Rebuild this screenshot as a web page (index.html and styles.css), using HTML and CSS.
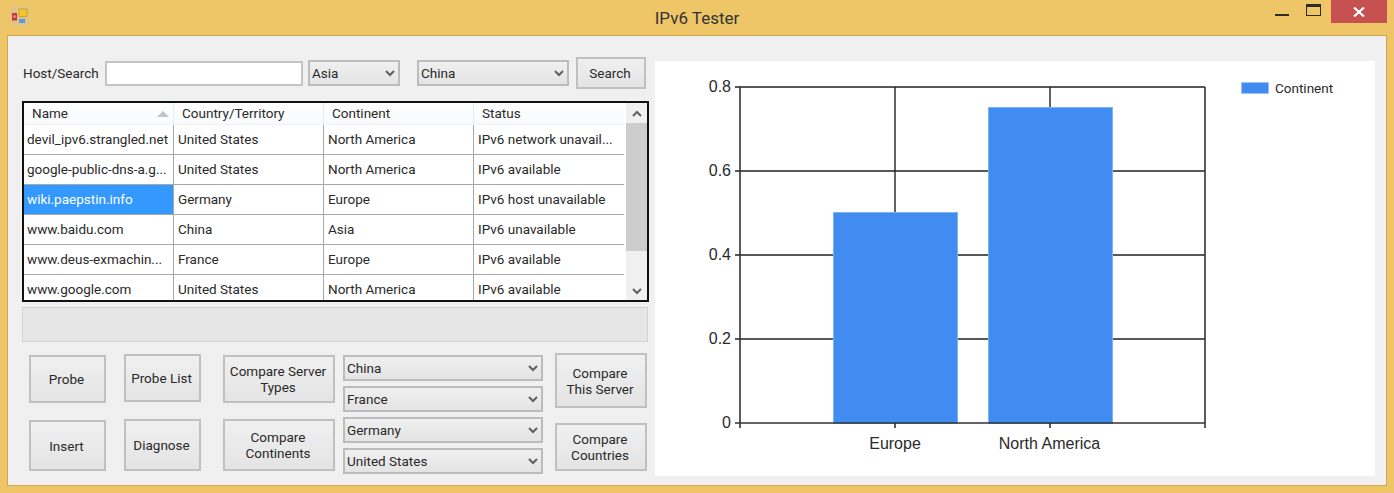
FILE: index.html
```html
<!DOCTYPE html>
<html lang="en">
<head>
    <meta charset="UTF-8">
    <meta name="viewport" content="width=device-width, initial-scale=1.0">
    <title>IPv6 Tester</title>
    <link rel="stylesheet" href="styles.css">
</head>
<body>

<svg class="defs" width="0" height="0">
    <symbol id="chev" viewBox="0 0 10 7">
        <path d="M1 1 L5 5 L9 1" fill="none" stroke="#606060" stroke-width="2"/>
    </symbol>
    <symbol id="chev-up" viewBox="0 0 10 7">
        <path d="M1 6 L5 2 L9 6" fill="none" stroke="#606060" stroke-width="2"/>
    </symbol>
</svg>

<div class="window">
    <div class="titlebar">
        <svg class="app-icon" width="18" height="18" viewBox="0 0 18 18">
            <rect width="18" height="18" fill="#dcc48a"/>
            <rect x="1" y="6" width="5" height="7.5" fill="#c8383c"/>
            <rect x="2.5" y="8.5" width="2" height="2" fill="#f0c0b0"/>
            <rect x="8" y="2" width="8" height="7.5" fill="#f4c62c" stroke="#b89020" stroke-width="0.6"/>
            <rect x="8" y="12" width="6" height="4" fill="#5a9ae0"/>
        </svg>
        <div class="title">IPv6 Tester</div>
        <div class="win-btns">
            <div class="win-min"></div>
            <div class="win-max"></div>
            <div class="win-close">
                <svg width="12" height="10" viewBox="0 0 12 10">
                    <path d="M1 0.5 L11 9.5 M11 0.5 L1 9.5" stroke="#fff" stroke-width="2.2"/>
                </svg>
            </div>
        </div>
    </div>

    <div class="panel">
        <div class="left">
            <div class="search-row">
                <label class="host-label">Host/Search</label>
                <input type="text" class="host-input">
                <div class="combo combo-continent"><span>Asia</span><svg><use href="#chev"/></svg></div>
                <div class="combo combo-country"><span>China</span><svg><use href="#chev"/></svg></div>
                <button class="btn btn-search">Search</button>
            </div>

            <div class="grid-box">
                <div class="grid-scroll">
                    <table class="hosts">
                        <thead>
                            <tr>
                                <th class="col-wide">Name<i class="sort"></i></th>
                                <th class="col-wide">Country/Territory</th>
                                <th class="col-wide">Continent</th>
                                <th>Status</th>
                            </tr>
                        </thead>
                        <tbody>
                            <tr><td>devil_ipv6.strangled.net</td><td>United States</td><td>North America</td><td>IPv6 network unavail...</td></tr>
                            <tr><td>google-public-dns-a.g...</td><td>United States</td><td>North America</td><td>IPv6 available</td></tr>
                            <tr><td class="selected">wiki.paepstin.info</td><td>Germany</td><td>Europe</td><td>IPv6 host unavailable</td></tr>
                            <tr><td>www.baidu.com</td><td>China</td><td>Asia</td><td>IPv6 unavailable</td></tr>
                            <tr><td>www.deus-exmachin...</td><td>France</td><td>Europe</td><td>IPv6 available</td></tr>
                            <tr><td>www.google.com</td><td>United States</td><td>North America</td><td>IPv6 available</td></tr>
                        </tbody>
                    </table>
                </div>
                <div class="scrollbar">
                    <svg class="arrow" width="10" height="7"><use href="#chev-up"/></svg>
                    <div class="thumb"></div>
                    <svg class="arrow arrow-down" width="10" height="7"><use href="#chev"/></svg>
                </div>
            </div>

            <div class="progress"></div>

            <div class="actions">
                <div class="col col1">
                    <button class="btn h48">Probe</button>
                    <button class="btn h51">Insert</button>
                </div>
                <div class="col col2">
                    <button class="btn h48">Probe List</button>
                    <button class="btn h52">Diagnose</button>
                </div>
                <div class="col col3">
                    <button class="btn h48">Compare Server Types</button>
                    <button class="btn h52">Compare Continents</button>
                </div>
                <div class="col col4">
                    <div class="combo"><span>China</span><svg><use href="#chev"/></svg></div>
                    <div class="combo"><span>France</span><svg><use href="#chev"/></svg></div>
                    <div class="combo"><span>Germany</span><svg><use href="#chev"/></svg></div>
                    <div class="combo"><span>United States</span><svg><use href="#chev"/></svg></div>
                </div>
                <div class="col col5">
                    <button class="btn h55">Compare<br>This Server</button>
                    <button class="btn h48">Compare Countries</button>
                </div>
            </div>
        </div>

        <div class="chart">
            <svg width="720" height="415" viewBox="655 61 720 415">
                <g stroke="#222" stroke-width="1.4" fill="none">
                    <path d="M735 87 H1205 M735 171 H1205 M735 255 H1205 M735 339 H1205"/>
                    <path d="M895 87 V212 M1050 87 V107"/>
                </g>
                <rect x="833.5" y="212.5" width="124" height="211" fill="#418cf0" stroke="#7fb2f5"/>
                <rect x="988.5" y="107.5" width="124" height="316" fill="#418cf0" stroke="#7fb2f5"/>
                <g stroke="#333" stroke-width="1.6" fill="none">
                    <path d="M740 87 V428 M1205 87 V428 M735 423 H1205 M895 423 V428 M1050 423 V428"/>
                </g>
                <g class="axis-y">
                    <text x="731" y="92">0.8</text>
                    <text x="731" y="176">0.6</text>
                    <text x="731" y="260">0.4</text>
                    <text x="731" y="344">0.2</text>
                    <text x="731" y="428">0</text>
                </g>
                <g class="axis-x">
                    <text x="895" y="449">Europe</text>
                    <text x="1049.5" y="449">North America</text>
                </g>
                <rect x="1241.5" y="82.5" width="27" height="11" fill="#418cf0" stroke="#9cc3f7"/>
                <text class="legend" x="1275" y="93">Continent</text>
            </svg>
        </div>
    </div>
</div>

</body>
</html>
```

FILE: styles.css
```css
* {
    box-sizing: border-box;
}
body {
    margin: 0;
    font-family: Roboto, "Open Sans", sans-serif;
    font-size: 13.5px;
    color: #2a2a2a;
}
.defs {
    display: block;
}
.window {
    width: 1394px;
    height: 493px;
    background-color: #eec667;
    overflow: hidden;
}

/* title bar */
.titlebar {
    height: 35px;
    display: flex;
    align-items: flex-start;
    position: relative;
}
.app-icon {
    margin: 7px 0 0 11px;
}
.title {
    position: absolute;
    left: 0;
    right: 0;
    top: 7px;
    text-align: center;
    font-size: 17px;
    line-height: 22px;
    color: #333;
}
.win-btns {
    margin-left: auto;
    margin-right: 7px;
    display: flex;
    align-items: flex-start;
}
.win-min {
    width: 14px;
    height: 2px;
    margin-top: 14px;
    background-color: #2b2b2b;
}
.win-max {
    width: 15px;
    height: 12px;
    margin: 4px 10px 0 17px;
    border: 1px solid #2b2b2b;
    border-top-width: 3px;
}
.win-close {
    width: 56px;
    height: 23px;
    background-color: #c75050;
    display: flex;
    align-items: center;
    justify-content: center;
}

/* main panel */
.panel {
    height: 451px;
    margin: 0 7px;
    border: 1px solid #cfa94f;
    background-color: #f0f0f0;
    display: flex;
}
.left {
    width: 647px;
    padding: 21px 0 0 14px;
}
.search-row {
    display: flex;
    align-items: center;
    height: 32px;
}
.host-label {
    width: 83px;
    padding-left: 1px;
}
.host-input {
    width: 198px;
    height: 25px;
    border: 2px solid #c4c4c4;
    background-color: #fff;
    margin-right: 5px;
}
.combo {
    height: 26px;
    display: flex;
    align-items: center;
    justify-content: space-between;
    padding: 0 3px 0 2px;
    border: 2px solid #bcbcbc;
    background: linear-gradient(#f0f0f0, #e4e4e4);
}
.combo svg {
    width: 10px;
    height: 7px;
}
.combo-continent {
    width: 92px;
    margin-right: 17px;
}
.combo-country {
    width: 152px;
    margin-right: 7px;
}
.btn {
    font-family: inherit;
    font-size: 13.5px;
    line-height: 16px;
    color: #2a2a2a;
    padding: 0 4px 0 2px;
    border: 2px solid #c0c0c0;
    background: linear-gradient(#f0f0f0, #e4e4e4);
}
.btn-search {
    width: 70px;
    height: 32px;
}
.h48 {
    height: 48px;
}
.h51 {
    height: 51px;
}
.h52 {
    height: 52px;
}
.h55 {
    height: 55px;
}

/* data grid */
.grid-box {
    width: 627px;
    height: 201px;
    margin-top: 12px;
    border: 2px solid #111;
    display: flex;
    background-color: #fff;
}
.grid-scroll {
    width: 602px;
    overflow: hidden;
}
.hosts {
    width: 602px;
    table-layout: fixed;
    border-collapse: separate;
    border-spacing: 0;
}
.col-wide {
    width: 150px;
}
.hosts th {
    height: 22px;
    padding: 0 0 1px 8px;
    font-weight: normal;
    text-align: left;
    background: linear-gradient(#fff, #f8fafd);
    border-right: 1px solid #e3ecf6;
    border-bottom: 1px solid #eef3fa;
    position: relative;
    white-space: nowrap;
}
.hosts td {
    height: 30px;
    padding: 0 0 2px 4px;
    white-space: nowrap;
    overflow: hidden;
    border-right: 1px solid #a8a8a8;
    border-bottom: 1px solid #a8a8a8;
}
.hosts td:first-child {
    padding-left: 3px;
}
.hosts td.selected {
    background-color: #3399ff;
    color: #fff;
}
.sort {
    position: absolute;
    right: 4px;
    top: 8px;
    border-left: 6px solid transparent;
    border-right: 6px solid transparent;
    border-bottom: 6px solid #c4c4c4;
}
.scrollbar {
    width: 21px;
    margin-left: 2px;
    background-color: #f0f0f0;
    display: flex;
    flex-direction: column;
    align-items: center;
}
.arrow {
    flex: none;
    margin: 7px 0 6px;
}
.arrow-down {
    margin: auto 0 5px;
}
.thumb {
    width: 100%;
    height: 128px;
    background-color: #cdcdcd;
}

.progress {
    width: 626px;
    height: 35px;
    margin-top: 5px;
    border: 1px solid #d2d2d2;
    background-color: #e6e6e6;
}

/* button block under the grid */
.actions {
    display: flex;
    margin: 11px 0 0 7px;
}
.col {
    display: flex;
    flex-direction: column;
}
.col1 {
    width: 77px;
    padding-top: 2px;
    gap: 17px;
    margin-right: 18px;
}
.col2 {
    width: 77px;
    padding-top: 1px;
    gap: 17px;
    margin-right: 22px;
}
.col3 {
    width: 112px;
    padding-top: 2px;
    gap: 16px;
    margin-right: 8px;
}
.col4 {
    width: 200px;
    padding-top: 2px;
    gap: 5px;
    margin-right: 12px;
}
.col5 {
    width: 92px;
    gap: 15px;
}

/* chart */
.chart {
    width: 720px;
    height: 415px;
    margin-top: 25px;
    background-color: #fff;
}
.chart svg {
    display: block;
}
.chart text {
    font-family: "Liberation Sans", Arial, sans-serif;
    font-size: 16px;
    fill: #2a2a2a;
}
.axis-y text {
    text-anchor: end;
}
.axis-x text {
    text-anchor: middle;
}
.chart .legend {
    font-family: Roboto, sans-serif;
    font-size: 13.5px;
}
```
